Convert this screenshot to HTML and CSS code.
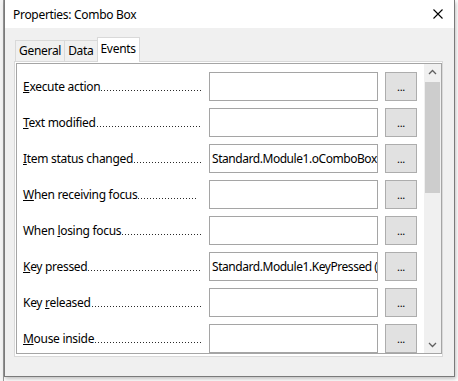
FILE: index.html
```html
<!DOCTYPE html>
<html lang="en">
   <head>
      <meta charset="UTF-8">
      <title>Properties: Combo Box</title>
      <link rel="stylesheet" href="styles.css">
   </head>
   <body>
      <div class="dialog">
         <div class="titlebar">
            <span class="title">Properties: Combo Box</span>
            <svg class="close" width="10" height="10" viewBox="0 0 10 10"><path d="M0.5 0.5 L9.5 9.5 M9.5 0.5 L0.5 9.5" stroke="#000" stroke-width="1.1"/></svg>
         </div>
         <div class="body">
            <div class="tabs">
               <div class="tab">General</div>
               <div class="tab">Data</div>
               <div class="tab active">Events</div>
            </div>
            <div class="page">
               <div class="scroller">
                  <div class="rows">
                     <div class="row">
                        <span class="label"><span><u>E</u>xecute action</span><i class="dots"></i></span>
                        <div class="field"></div>
                        <div class="btn">...</div>
                     </div>
                     <div class="row">
                        <span class="label"><span><u>T</u>ext modified</span><i class="dots"></i></span>
                        <div class="field"></div>
                        <div class="btn">...</div>
                     </div>
                     <div class="row">
                        <span class="label"><span><u>I</u>tem status changed</span><i class="dots"></i></span>
                        <div class="field">Standard.Module1.oComboBox</div>
                        <div class="btn">...</div>
                     </div>
                     <div class="row">
                        <span class="label"><span><u>W</u>hen receiving focus</span><i class="dots short"></i></span>
                        <div class="field"></div>
                        <div class="btn">...</div>
                     </div>
                     <div class="row">
                        <span class="label"><span>When <u>l</u>osing focus</span><i class="dots"></i></span>
                        <div class="field"></div>
                        <div class="btn">...</div>
                     </div>
                     <div class="row">
                        <span class="label"><span><u>K</u>ey pressed</span><i class="dots"></i></span>
                        <div class="field">Standard.Module1.KeyPressed (</div>
                        <div class="btn">...</div>
                     </div>
                     <div class="row">
                        <span class="label"><span>Key <u>r</u>eleased</span><i class="dots"></i></span>
                        <div class="field"></div>
                        <div class="btn">...</div>
                     </div>
                     <div class="row">
                        <span class="label"><span><u>M</u>ouse inside</span><i class="dots"></i></span>
                        <div class="field"></div>
                        <div class="btn">...</div>
                     </div>
                  </div>
                  <div class="scrollbar">
                     <svg class="arrow" width="17" height="17" viewBox="0 0 17 17"><path d="M5 10 L8.5 6.5 L12 10" fill="none" stroke="#606060" stroke-width="1.3"/></svg>
                     <div class="track"><div class="thumb"></div></div>
                     <svg class="arrow" width="17" height="17" viewBox="0 0 17 17"><path d="M5 7 L8.5 10.5 L12 7" fill="none" stroke="#606060" stroke-width="1.3"/></svg>
                  </div>
               </div>
            </div>
         </div>
      </div>
   </body>
</html>
```

FILE: styles.css
```css
* {
margin: 0;
padding: 0;
box-sizing: border-box;
}
body {
width: 458px;
height: 381px;
overflow: hidden;
background: #ffffff;
font-family: "Noto Sans", "Open Sans", sans-serif;
font-size: 12px;
letter-spacing: -0.3px;
color: #000;
background-image: linear-gradient(to right, #f4f4f4 0, #f4f4f4 3px, #9a9a9a 3px, #9a9a9a 4px, transparent 4px);
}
.dialog {
margin-left: 4px;
width: 451px;
height: 377px;
border: 1px solid #7a7a7a;
border-top: none;
background: #f0f0f0;
display: flex;
flex-direction: column;
box-shadow: 1px 2px 4px rgba(0, 0, 0, 0.25);
}
.titlebar {
height: 29px;
background: #ffffff;
display: flex;
align-items: center;
justify-content: space-between;
padding: 0 11px 0 8px;
}
.title {
font-size: 12px;
margin-top: 1px;
}
.close {
display: block;
}
.body {
flex: 1;
padding: 9px 11px 19px 9px;
display: flex;
flex-direction: column;
}
.tabs {
display: flex;
align-items: flex-end;
height: 24px;
padding-left: 1px;
position: relative;
z-index: 1;
}
.tab {
height: 21px;
padding: 0 3px;
border: 1px solid #d9d9d9;
border-bottom: none;
background: #f0f0f0;
line-height: 20px;
margin-right: -1px;
}
.active {
height: 25px;
margin-bottom: -1px;
background: #ffffff;
line-height: 22px;
padding: 0 3px;
}
.page {
flex: 1;
border: 1px solid #d9d9d9;
background: #ffffff;
padding: 1px 0 2px 1px;
display: flex;
}
.scroller {
flex: 1;
border: 1px solid #a5a5a5;
display: flex;
overflow: hidden;
}
.rows {
flex: 1;
padding: 8px 0 0 6px;
display: flex;
flex-direction: column;
gap: 7px;
}
.row {
display: flex;
align-items: center;
height: 29px;
}
.label {
width: 179px;
margin-right: 7px;
display: flex;
align-items: baseline;
white-space: nowrap;
}
.dots {
flex: 1;
height: 1px;
margin-left: 1px;
background-image: linear-gradient(to right, #2a2a2a 1px, transparent 1px);
background-size: 3px 1px;
}
.short {
margin-right: 4px;
}
.field {
width: 169px;
height: 29px;
border: 1px solid #a5a5a5;
background: #ffffff;
padding: 0 1px 0 2px;
line-height: 27px;
letter-spacing: -0.45px;
white-space: nowrap;
overflow: hidden;
}
.btn {
width: 32px;
height: 29px;
margin-left: 7px;
border: 1px solid #adadad;
background: #e1e1e1;
text-align: center;
line-height: 27px;
font-size: 11px;
}
.scrollbar {
width: 17px;
background: #f0f0f0;
display: flex;
flex-direction: column;
}
.arrow {
display: block;
}
.track {
flex: 1;
padding-top: 1px;
}
.thumb {
width: 15px;
margin-left: 1px;
height: 111px;
background: #cdcdcd;
}
```
